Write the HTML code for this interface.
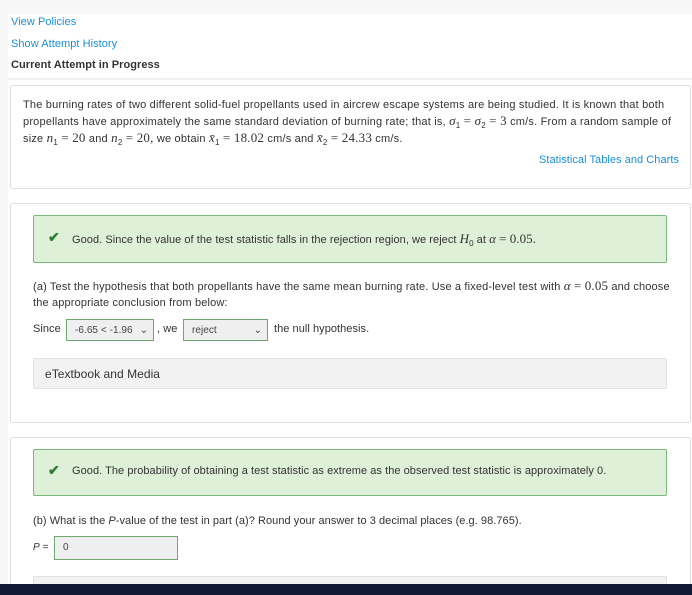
<!DOCTYPE html>
<html><head><style>
html,body{margin:0;width:692px;height:595px;overflow:hidden}
body{background:#f7f7f7;font-family:"Liberation Sans",sans-serif;font-size:11px;color:#333;position:relative;letter-spacing:0.05px}
.a{position:absolute;white-space:nowrap}
.lnk{color:#1a8fd6}
.card{position:absolute;left:10px;width:679px;background:#fff;border:1px solid #ddd;border-radius:3px}
.ok{position:absolute;left:22px;width:632px;background:#dff0d8;border:1px solid #7bb67a;border-radius:2px}
.m{font-family:"Liberation Serif",serif;font-size:13px;font-style:italic}
.n{font-family:"Liberation Serif",serif;font-size:13px}
sub{font-size:8px;line-height:0}
.sel{position:absolute;height:22px;border:1px solid #6fa86f;background:#efefef;font-size:10px;line-height:22px;padding-left:8px;box-sizing:border-box;color:#444}
.chk{position:absolute;left:14px;color:#2e7d32;font-size:14px;font-weight:bold}
</style></head><body>
<div class="a" style="left:8px;top:14px;width:684px;height:570px;background:#fff"></div>
<div class="a lnk" style="left:11px;top:16px">View Policies</div>
<div class="a lnk" style="left:11px;top:38px">Show Attempt History</div>
<div class="a" style="left:11px;top:59px;font-weight:bold;color:#333">Current Attempt in Progress</div>
<div class="a" style="left:8px;top:78px;width:684px;height:2px;background:#f0f0f0"></div>
<div class="card" style="top:85px;height:102px">
<div class="a" style="left:12px;top:11px;line-height:16px;letter-spacing:0.2px">The burning rates of two different solid-fuel propellants used in aircrew escape systems are being studied. It is known that both<br>propellants have approximately the same standard deviation of burning rate; that is, <span class="m">σ</span><sub>1</sub> <span class="n">= </span><span class="m">σ</span><sub>2</sub> <span class="n">= 3</span> cm/s. From a random sample of<br>size <span class="m">n</span><sub>1</sub> <span class="n">= 20</span> and <span class="m">n</span><sub>2</sub> <span class="n">= 20,</span> we obtain <span class="m">x̄</span><sub>1</sub> <span class="n">= 18.02</span> cm/s and <span class="m">x̄</span><sub>2</sub> <span class="n">= 24.33</span> cm/s.</div>
<div class="a lnk" style="right:11px;top:68px">Statistical Tables and Charts</div>
</div>
<div class="card" style="top:203px;height:218px">
<div class="ok" style="top:11px;height:46px"><span class="chk" style="top:13px">✔</span><div class="a" style="left:38px;top:15px">Good. Since the value of the test statistic falls in the rejection region, we reject <span class="m">H</span><sub>0</sub> at <span class="m">α</span> <span class="n">= 0.05.</span></div></div>
<div class="a" style="left:22px;top:74px;line-height:16px;letter-spacing:0.15px">(a) Test the hypothesis that both propellants have the same mean burning rate. Use a fixed-level test with <span class="m">α</span> <span class="n">= 0.05</span> and choose<br>the appropriate conclusion from below:</div>
<div class="a" style="left:22px;top:119px">Since</div>
<div class="sel" style="left:55px;top:115px;width:88px">-6.65 &lt; -1.96<span style="position:absolute;right:5px">⌄</span></div>
<div class="a" style="left:146px;top:119px">, we</div>
<div class="sel" style="left:172px;top:115px;width:85px">reject<span style="position:absolute;right:5px">⌄</span></div>
<div class="a" style="left:263px;top:119px">the null hypothesis.</div>
<div class="a" style="left:22px;top:154px;width:632px;height:29px;background:#f2f2f2;border:1px solid #e4e4e4;border-radius:2px"><span class="a" style="left:11px;top:8px;font-size:12px">eTextbook and Media</span></div>
</div>
<div class="card" style="top:437px;height:160px">
<div class="ok" style="top:11px;height:45px"><span class="chk" style="top:12px">✔</span><div class="a" style="left:38px;top:15px">Good. The probability of obtaining a test statistic as extreme as the observed test statistic is approximately 0.</div></div>
<div class="a" style="left:22px;top:77px">(b) What is the <i>P</i>-value of the test in part (a)? Round your answer to 3 decimal places (e.g. 98.765).</div>
<div class="a" style="left:22px;top:104px;font-size:10px"><i>P</i> =</div>
<div class="sel" style="left:43px;top:98px;width:124px;height:24px;line-height:22px">0</div>
<div class="a" style="left:22px;top:138px;width:632px;height:29px;background:#f2f2f2;border:1px solid #e4e4e4"></div>
</div>
<div class="a" style="left:0;top:584px;width:692px;height:11px;background:#111a33"></div>
</body></html>
